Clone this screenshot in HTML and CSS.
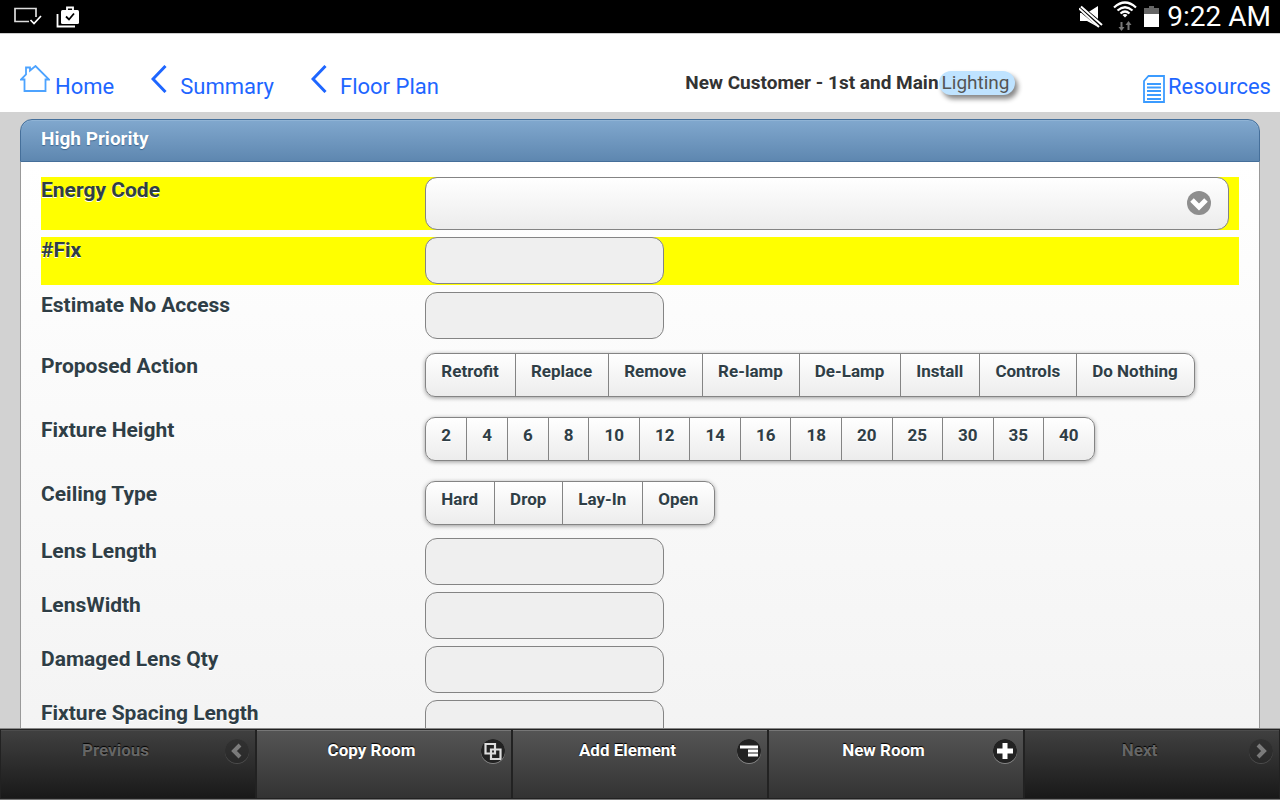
FILE: index.html
```html
<!DOCTYPE html>
<html lang="en">
<head>
  <meta charset="UTF-8" />
  <meta name="viewport" content="width=device-width, initial-scale=1.0" />
  <title>Lighting</title>
  <link rel="stylesheet" href="styles.css">
</head>
<body>
  <div class="statusbar">
    <svg width="28" height="22" viewBox="0 0 28 22" fill="none" stroke="#ddd" stroke-width="1.7">
      <path d="M15 15.500H1V2.500H22V11" />
      <path d="M16.500 14l3.500 3.500 7-7.500" stroke="#fff" />
    </svg>
    <svg class="status-bag" width="24" height="24" viewBox="0 0 24 24">
      <path d="M1.500 9v12.500H19" fill="none" stroke="#fff" stroke-width="1.800" />
      <rect x="5" y="5" width="18" height="14" rx="1.500" fill="#fff" />
      <path d="M11 5V2.500h6V5" fill="none" stroke="#fff" stroke-width="1.800" />
      <path d="M10 11.500l3 3 5-6" fill="none" stroke="#000" stroke-width="1.800" />
    </svg>
    <div class="status-right">
      <svg width="24" height="24" viewBox="0 0 24 24">
        <path d="M1 8h7L19 1v21L8 16H1z" fill="#fff" />
        <path d="M0 2l24 20" stroke="#000" stroke-width="6" />
        <path d="M0 3.500L20 22M2 1.500L23 20" stroke="#fff" stroke-width="2" />
      </svg>
      <svg class="status-wifi" width="24" height="31" viewBox="0 0 24 31">
        <g fill="none" stroke="#fff" stroke-width="2.200">
          <path d="M1 6.500Q12-3.500 23 6.500" />
          <path d="M4.500 9.500Q12 3 19.500 9.500" />
          <path d="M7.500 12.500Q12 8.500 16.500 12.500" />
        </g>
        <path d="M9.500 14Q12 12 14.500 14L12 16.500z" fill="#fff" />
        <path d="M7.500 21h2v5h2L8.500 30l-3-4h2zM14.500 29h2v-5h2l-3-4-3 4h2z" fill="#777" />
      </svg>
      <svg class="status-battery" width="15" height="21" viewBox="0 0 15 21">
        <path d="M0 2h5V0h5v2h5v6H0z" fill="#666" />
        <path d="M0 8h15v13H0z" fill="#fff" />
      </svg>
      <span class="clock">9:22 AM</span>
    </div>
  </div>

  <header class="header">
    <nav class="nav">
      <a class="home" href="#">
        <svg width="30" height="28" viewBox="0 0 30 28" fill="none" stroke="#4da3ff" stroke-width="1.800">
          <path d="M4.500 14.500H1L6 9.500V2.500h4v3L15.500 1 29 14.500h-3.500V26h-21z" />
        </svg>
        Home
      </a>
      <a class="back" href="#">
        <svg width="16" height="28" viewBox="0 0 16 28" fill="none" stroke="#1e66ff" stroke-width="3">
          <path d="M14.500 1L2 14l12.500 13" />
        </svg>
        Summary
      </a>
      <a class="back" href="#">
        <svg width="16" height="28" viewBox="0 0 16 28" fill="none" stroke="#1e66ff" stroke-width="3">
          <path d="M14.500 1L2 14l12.500 13" />
        </svg>
        Floor Plan
      </a>
    </nav>
    <h1 class="title">New Customer - 1st and Main<span class="tag">Lighting</span></h1>
    <a class="resources" href="#">
      <svg width="22" height="28" viewBox="0 0 22 28" fill="none" stroke="#3b9bff" stroke-width="1.800">
        <path d="M5.500 1H21v26H1V6z" />
        <path d="M4 9h14M4 12.500h14M4 16h14M4 20h14M4 24h14" />
      </svg>
      Resources
    </a>
  </header>

  <main class="content">
    <section class="panel">
      <h2 class="panel-title">High Priority</h2>
      <form class="fields">
        <div class="row required">
          <label for="energyCode">Energy Code</label>
          <div class="select">
            <select id="energyCode"><option></option></select>
            <svg width="24" height="24" viewBox="0 0 24 24">
              <circle cx="12" cy="12" r="12" fill="#8e8e8e" />
              <path d="M5 9l7 7 7-7" fill="none" stroke="#fff" stroke-width="5" />
            </svg>
          </div>
        </div>
        <div class="row required">
          <label for="fix">#Fix</label>
          <input class="text" type="text" id="fix">
        </div>
        <div class="row">
          <label for="noAccess">Estimate No Access</label>
          <input class="text" type="text" id="noAccess">
        </div>
        <div class="row choice" role="radiogroup" aria-labelledby="actionLabel">
          <span class="label" id="actionLabel">Proposed Action</span>
          <div class="group words">
            <label><input type="radio" name="action">Retrofit</label>
            <label><input type="radio" name="action">Replace</label>
            <label><input type="radio" name="action">Remove</label>
            <label><input type="radio" name="action">Re-lamp</label>
            <label><input type="radio" name="action">De-Lamp</label>
            <label><input type="radio" name="action">Install</label>
            <label><input type="radio" name="action">Controls</label>
            <label><input type="radio" name="action">Do Nothing</label>
          </div>
        </div>
        <div class="row choice" role="radiogroup" aria-labelledby="heightLabel">
          <span class="label" id="heightLabel">Fixture Height</span>
          <div class="group">
            <label><input type="radio" name="height">2</label>
            <label><input type="radio" name="height">4</label>
            <label><input type="radio" name="height">6</label>
            <label><input type="radio" name="height">8</label>
            <label><input type="radio" name="height">10</label>
            <label><input type="radio" name="height">12</label>
            <label><input type="radio" name="height">14</label>
            <label><input type="radio" name="height">16</label>
            <label><input type="radio" name="height">18</label>
            <label><input type="radio" name="height">20</label>
            <label><input type="radio" name="height">25</label>
            <label><input type="radio" name="height">30</label>
            <label><input type="radio" name="height">35</label>
            <label><input type="radio" name="height">40</label>
          </div>
        </div>
        <div class="row choice" role="radiogroup" aria-labelledby="ceilingLabel">
          <span class="label" id="ceilingLabel">Ceiling Type</span>
          <div class="group words">
            <label><input type="radio" name="ceiling">Hard</label>
            <label><input type="radio" name="ceiling">Drop</label>
            <label><input type="radio" name="ceiling">Lay-In</label>
            <label><input type="radio" name="ceiling">Open</label>
          </div>
        </div>
        <div class="row">
          <label for="lensLength">Lens Length</label>
          <input class="text" type="text" id="lensLength">
        </div>
        <div class="row">
          <label for="lensWidth">LensWidth</label>
          <input class="text" type="text" id="lensWidth">
        </div>
        <div class="row">
          <label for="damagedQty">Damaged Lens Qty</label>
          <input class="text" type="text" id="damagedQty">
        </div>
        <div class="row">
          <label for="spacingLength">Fixture Spacing Length</label>
          <input class="text" type="text" id="spacingLength">
        </div>
      </form>
    </section>
  </main>

  <footer class="footer">
    <button type="button" disabled>Previous
      <svg width="24" height="24" viewBox="0 0 24 24">
        <circle cx="12" cy="12" r="12" fill="#222" />
        <path d="M15 6l-6 6 6 6" fill="none" stroke="#fff" stroke-width="4" />
      </svg>
    </button>
    <button type="button">Copy Room
      <svg width="24" height="24" viewBox="0 0 24 24">
        <circle cx="12" cy="12" r="12" fill="#222" />
        <path d="M4.500 5h9.500v9.500H4.500zM10 10.500h9.500V20H10z" fill="none" stroke="#ddd" stroke-width="2.200" />
      </svg>
    </button>
    <button type="button">Add Element
      <svg width="24" height="24" viewBox="0 0 24 24">
        <circle cx="12" cy="12" r="12" fill="#222" />
        <path d="M3 8h18M11 12h10M11 16h10" stroke="#fff" stroke-width="2.800" />
      </svg>
    </button>
    <button type="button">New Room
      <svg width="24" height="24" viewBox="0 0 24 24">
        <circle cx="12" cy="12" r="12" fill="#222" />
        <path d="M4 12h16M12 4v16" stroke="#fff" stroke-width="5" />
      </svg>
    </button>
    <button type="button" disabled>Next
      <svg width="24" height="24" viewBox="0 0 24 24">
        <circle cx="12" cy="12" r="12" fill="#222" />
        <path d="M9 6l6 6-6 6" fill="none" stroke="#fff" stroke-width="4" />
      </svg>
    </button>
  </footer>
</body>
</html>
```

FILE: styles.css
```css
* {
  box-sizing: border-box;
}
body {
  margin: 0;
  height: 100vh;
  display: flex;
  flex-direction: column;
  overflow: hidden;
  background: #d2d2d2;
  color: #2f3e46;
  font-family: Roboto, sans-serif;
}

/* device status bar */
.statusbar {
  display: flex;
  align-items: center;
  height: 33px;
  flex-shrink: 0;
  padding: 0 9px 0 14px;
  background: #000;
  color: #fff;
}
.status-bag {
  margin-left: 14px;
}
.status-right {
  display: flex;
  align-items: center;
  margin-left: auto;
}
.status-wifi {
  margin-left: 10px;
}
.status-battery {
  margin: 0 8px 0 7px;
}
.clock {
  font-size: 28px;
  line-height: 33px;
}

/* top navigation */
.header {
  display: flex;
  justify-content: space-between;
  height: 79px;
  flex-shrink: 0;
  padding: 31px 9px 0 20px;
  background: #fff;
  border-top: 1px solid #ccc;
}
.header a {
  display: flex;
  color: #1e66ff;
  font-size: 22px;
  line-height: 28px;
  text-decoration: none;
}
.nav {
  display: flex;
  gap: 37px;
}
.nav a {
  padding-top: 8px;
}
.nav svg {
  margin-top: -8px;
}
.home {
  gap: 5px;
}
.back {
  gap: 13px;
}
.title {
  margin: 5px 0 0;
  padding-left: 118px;
  color: #333;
  font-size: 19px;
  line-height: 26px;
}
.tag {
  display: inline-block;
  padding: 0 5px 0 3px;
  border-radius: 12px;
  background: #bfe3ff;
  box-shadow: 3px 4px 5px #888;
  color: #555;
  font-weight: 400;
  line-height: 24px;
}
.resources {
  gap: 3px;
  padding-top: 8px;
}
.resources svg {
  margin-top: 2px;
}

/* form panel */
.content {
  flex: 1;
  min-height: 0;
  overflow: hidden;
  padding: 7px 20px 0;
}
.panel-title {
  margin: 0;
  height: 43px;
  padding: 0 20px;
  border: 1px solid #456f9a;
  border-radius: 12px 12px 0 0;
  background: linear-gradient(#81a8ce, #5e87b0);
  box-shadow: inset 0 1px 0 #8fb3d5;
  color: #fff;
  font-size: 19px;
  line-height: 38px;
  text-shadow: 0 1px 1px #3e6790;
}
.fields {
  display: flex;
  flex-direction: column;
  gap: 7px;
  padding: 15px 20px;
  border: 1px solid #999;
  border-top: 0;
  background: linear-gradient(#fff, #f3f3f3);
}
.row {
  display: grid;
  grid-template-columns: 32% 1fr;
  column-gap: 1px;
  align-items: start;
  font-size: 21px;
  font-weight: 700;
  line-height: 26px;
  text-shadow: 0 1px 0 #fff;
}
.required {
  min-height: 48px;
  background: #ff0;
}
.select {
  position: relative;
  margin-right: 10px;
}
.select select {
  display: block;
  width: 100%;
  height: 53px;
  border: 1px solid #848484;
  border-radius: 12px;
  background: linear-gradient(#fff, #ececec);
  appearance: none;
}
.select svg {
  position: absolute;
  top: 14px;
  right: 18px;
  pointer-events: none;
}
.text {
  width: 239px;
  height: 47px;
  padding: 0 8px;
  border: 1px solid #848484;
  border-radius: 12px;
  background: #efefef;
  font: inherit;
}
.choice {
  padding: 7px 0 6px;
}
.group {
  display: flex;
  justify-self: start;
  border: 1px solid #848484;
  border-radius: 10px;
  background: linear-gradient(#fff, #ececec);
  box-shadow: 0 1px 4px #999;
}
.group label {
  height: 42px;
  padding: 0 15px;
  border-right: 1px solid #848484;
  font-size: 17px;
  line-height: 34px;
}
.words label {
  padding-right: 16px;
}
.group label:last-child {
  border-right: 0;
}
.group input {
  position: absolute;
  opacity: 0;
  pointer-events: none;
}
.group label:focus-within {
  color: #1e66ff;
}

/* bottom toolbar */
.footer {
  display: flex;
  flex-shrink: 0;
  height: 72px;
  padding: 1px 0;
  border-top: 1px solid #888;
  border-bottom: 1px solid #777;
  background: #222;
}
.footer button {
  position: relative;
  flex: 1;
  padding: 0 38px 29px 13px;
  border: 1px solid #222;
  border-width: 0 1px;
  background: linear-gradient(#555, #333);
  box-shadow: inset 0 1px 0 #777;
  color: #fff;
  font: 700 17px Roboto, sans-serif;
  text-shadow: 0 -1px 1px #000;
}
.footer button:disabled {
  background: linear-gradient(#404040, #191919);
  box-shadow: inset 0 1px 0 #4c4c4c;
  color: #666;
}
.footer svg {
  position: absolute;
  top: 9px;
  right: 6px;
  border-radius: 12px;
  box-shadow: 0 1px 0 #888;
}
.footer button:disabled svg {
  opacity: 0.35;
}
```
